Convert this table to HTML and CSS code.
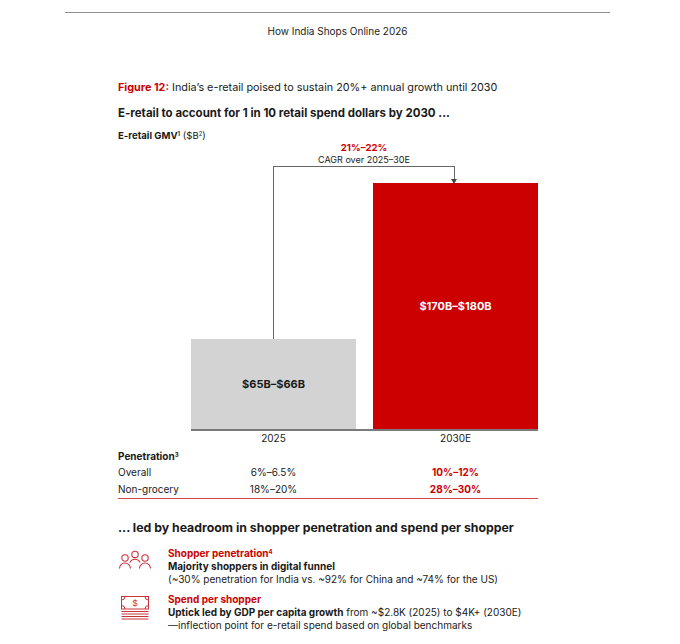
FILE: index.html
```html
<!DOCTYPE html>
<html lang="en">
<head>
<meta charset="utf-8">
<title>How India Shops Online 2026</title>
<link rel="stylesheet" href="styles.css">
</head>
<body>
<div class="page">
  <header class="running-head">How India Shops Online 2026</header>
  <main class="content">
    <h1 class="fig-title"><span class="fig-num">Figure 12:</span> India’s e-retail poised to sustain 20%+ annual growth until 2030</h1>
    <h2 class="subhead">E-retail to account for 1 in 10 retail spend dollars by 2030 ...</h2>
    <div class="axis-title"><b>E-retail GMV<sup>1</sup></b> ($B<sup>2</sup>)</div>

    <div class="chart">
      <div class="cagr">
        <div class="cagr-val">21%–22%</div>
        <div class="cagr-lbl">CAGR over 2025–30E</div>
      </div>
      <div class="bars">
        <div class="bracket"><span class="arrow"></span></div>
        <div class="bar bar-gray"><span>$65B–$66B</span></div>
        <div class="bar bar-red"><span>$170B–$180B</span></div>
      </div>
      <div class="years">
        <span>2025</span>
        <span>2030E</span>
      </div>
    </div>

    <div class="pen">
      <div class="pen-head">Penetration<sup>3</sup></div>
      <div class="pen-row">
        <span class="pen-lbl">Overall</span>
        <span class="pen-v">6%–6.5%</span>
        <span class="pen-v hi">10%–12%</span>
      </div>
      <div class="pen-row last">
        <span class="pen-lbl">Non-grocery</span>
        <span class="pen-v">18%–20%</span>
        <span class="pen-v hi">28%–30%</span>
      </div>
    </div>

    <h2 class="subhead2">... led by headroom in shopper penetration and spend per shopper</h2>

    <div class="item">
      <svg class="icon" viewBox="0 0 34 19" width="34" height="19" aria-hidden="true">
        <g fill="none" stroke="#c9343c" stroke-width="1.1">
          <circle cx="7" cy="8" r="3.2"/>
          <circle cx="17" cy="4.4" r="3.2"/>
          <circle cx="27" cy="8" r="3.2"/>
          <path d="M1.5 18.5 a5.5 5.5 0 0 1 11 0"/>
          <path d="M11.9 12.6 a5.6 5.6 0 0 1 10.2 0"/>
          <path d="M21.5 18.5 a5.5 5.5 0 0 1 11 0"/>
        </g>
      </svg>
      <div class="item-text">
        <div class="item-head">Shopper penetration<sup>4</sup></div>
        <div class="item-bold">Majority shoppers in digital funnel</div>
        <div>(~30% penetration for India vs. ~92% for China and ~74% for the US)</div>
      </div>
    </div>

    <div class="item">
      <svg class="icon icon-money" viewBox="0 0 28 24" width="28" height="24" aria-hidden="true">
        <g fill="none" stroke="#c9343c" stroke-width="1">
          <rect x="0.5" y="0.5" width="27" height="12.5"/>
          <path d="M0.5 4 q3.5 0 3.5 -3.5"/>
          <path d="M24 0.5 q0 3.5 3.5 3.5"/>
          <path d="M0.5 9.5 q3.5 0 3.5 3.5"/>
          <path d="M27.5 9.5 q-3.5 0 -3.5 3.5"/>
          <path d="M0.5 15.5 H27.5 M0.5 18 H27.5 M0.5 20.5 H27.5 M0.5 23 H27.5"/>
        </g>
        <text x="14" y="10.3" text-anchor="middle" class="dollar">$</text>
      </svg>
      <div class="item-text">
        <div class="item-head">Spend per shopper</div>
        <div><b>Uptick led by GDP per capita growth</b> from ~$2.8K (2025) to $4K+ (2030E)</div>
        <div>—inflection point for e-retail spend based on global benchmarks</div>
      </div>
    </div>
  </main>
</div>
</body>
</html>
```

FILE: styles.css
```css
html, body {
  margin: 0;
  padding: 0;
  background: #fff;
}
body {
  font-family: Inter, "Noto Sans", "Liberation Sans", sans-serif;
  color: #1a1a1a;
  width: 680px;
  height: 644px;
  overflow: hidden;
}
sup {
  font-size: 0.6em;
  line-height: 0;
  vertical-align: 0.55em;
}
.page {
  padding-top: 12px;
}
.running-head {
  margin: 0 70px 0 65px;
  border-top: 1px solid #8f8f8f;
  padding-top: 11px;
  text-align: center;
  font-size: 10px;
  line-height: 14px;
  color: #222;
}
.content {
  margin-left: 118px;
  width: 422px;
}
.fig-title {
  margin: 42px 0 0;
  font-size: 10.8px;
  line-height: 16px;
  font-weight: 400;
  white-space: nowrap;
}
.fig-num {
  color: #cc0000;
  font-weight: 700;
}
.subhead {
  margin: 8px 0 0;
  font-size: 11.5px;
  line-height: 18px;
  font-weight: 700;
  white-space: nowrap;
}
.axis-title {
  margin-top: 7px;
  font-size: 9.6px;
  line-height: 14px;
}
.chart {
  margin-top: -1px;
}
.cagr {
  margin-left: 155px;
  width: 182px;
  text-align: center;
}
.cagr-val {
  color: #cc0000;
  font-weight: 700;
  font-size: 9.6px;
  line-height: 12px;
}
.cagr-lbl {
  font-size: 9px;
  line-height: 12px;
}
.bars {
  position: relative;
  display: flex;
  align-items: flex-end;
  gap: 17px;
  height: 263px;
  margin-left: 73px;
  width: 347px;
  border-bottom: 2px solid #7a7a7a;
}
.bracket {
  position: absolute;
  left: 82px;
  top: 0;
  width: 182px;
  height: 173px;
  border-top: 1px solid #666;
  border-left: 1px solid #666;
  box-sizing: border-box;
}
.arrow {
  position: absolute;
  right: 0;
  top: 0;
  width: 1px;
  height: 12px;
  background: #666;
}
.arrow::after {
  content: "";
  position: absolute;
  left: -3px;
  bottom: -5px;
  border-left: 3.5px solid transparent;
  border-right: 3.5px solid transparent;
  border-top: 5px solid #444;
}
.bar {
  width: 165px;
  display: flex;
  align-items: center;
  justify-content: center;
  font-size: 11px;
  font-weight: 700;
}
.bar-gray {
  height: 90px;
  background: #d3d3d3;
  color: #1a1a1a;
}
.bar-red {
  height: 246px;
  background: #cc0000;
  color: #fff;
}
.years {
  display: grid;
  grid-template-columns: 165px 165px;
  column-gap: 17px;
  margin-left: 73px;
  font-size: 10px;
  line-height: 14px;
  text-align: center;
}
.pen {
  margin-top: 3px;
  width: 420px;
  border-bottom: 1px solid #d8434a;
  font-size: 10px;
}
.pen-head {
  font-weight: 700;
  line-height: 16px;
}
.pen-row {
  display: grid;
  grid-template-columns: 73px 165px 17px 165px;
  line-height: 16.5px;
}
.pen-row.last {
  padding-bottom: 1px;
}
.pen-v {
  text-align: center;
}
.pen-v:nth-child(2) {
  grid-column: 2;
}
.pen-v.hi {
  grid-column: 4;
  color: #cc0000;
  font-weight: 700;
}
.subhead2 {
  margin: 20px 0 0;
  font-size: 12.3px;
  line-height: 18px;
  font-weight: 700;
  white-space: nowrap;
}
.item {
  display: flex;
  align-items: flex-start;
  margin-top: 10px;
  font-size: 10px;
  line-height: 13px;
}
.item + .item {
  margin-top: 7px;
}
.icon {
  flex: none;
  margin-top: 3px;
  margin-right: 16px;
}
.icon-money {
  margin-left: 3px;
  margin-right: 19px;
}
.dollar {
  font-family: "Liberation Sans", sans-serif;
  font-size: 9px;
  fill: #c9343c;
}
.item-text {
  white-space: nowrap;
}
.item-head {
  color: #cc0000;
  font-weight: 700;
}
.item-bold {
  font-weight: 700;
}
```
